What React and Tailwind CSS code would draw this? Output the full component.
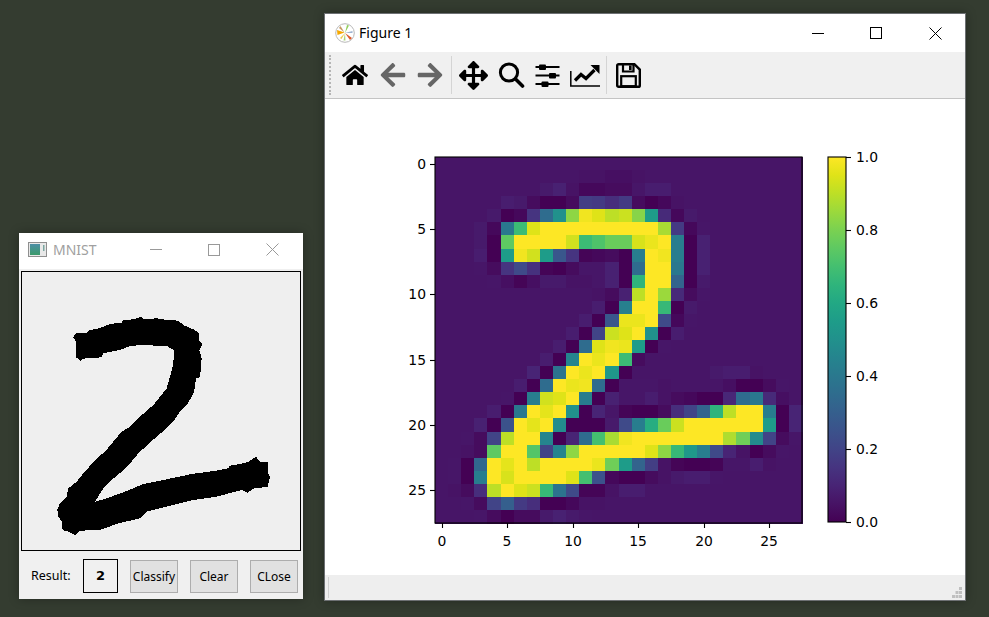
import React from "react";
import { FaHome, FaArrowLeft, FaArrowRight, FaArrowsAlt } from "react-icons/fa";

const VIR = ["#440154","#471365","#482475","#463480","#414487","#3b528b","#355f8d","#2f6c8e","#2a788e","#25848e","#21918c","#1e9c89","#22a884","#2fb47c","#44bf70","#5ec962","#7ad151","#9bd93c","#bddf26","#dfe318","#fde725"];
const hex = (s) => [1, 3, 5].map((i) => parseInt(s.slice(i, i + 2), 16));
const viridis = (p) => {
  const t = (Math.max(0, Math.min(100, p)) / 100) * 20;
  const i = Math.min(19, Math.floor(t));
  const f = t - i;
  const a = hex(VIR[i]);
  const b = hex(VIR[i + 1]);
  return `rgb(${a.map((v, k) => Math.round(v + (b[k] - v) * f)).join(",")})`;
};

const BG = 5.5;
const S = {
  0: [],
  1: [[11, [5, 5, 4, 4, 5]]],
  2: [[8, [7, 9, 5, 2, 2, 3, 3, 6, 8, 8]]],
  3: [[5, [8, 7, 3, 0, 0, 3, 18, 17, 13, 17, 3, 0, 2, 5]]],
  4: [[4, [7, 0, 2, 15, 35, 50, 83, 98, 95, 90, 92, 82, 55, 12, 2, 7]]],
  5: [[3, [7, 2, 40, 68, 95, 100, 100, 100, 100, 100, 100, 100, 100, 100, 87, 17, 2, 6]]],
  6: [[3, [7, 0, 75, 100, 100, 100, 100, 93, 68, 72, 77, 77, 94, 97, 100, 42, 0, 9]]],
  7: [[3, [8, 0, 55, 98, 93, 55, 27, 15, 1, 2, 3, 0, 42, 100, 98, 42, 0, 9]]],
  8: [[3, [6, 3, 15, 22, 14, 1, 0, 3, 6, 6, 9, 0, 35, 100, 100, 40, 0, 9]]],
  9: [[4, [6, 4, 1, 4, 7, 7, 5, 5, 6, 9, 0, 65, 100, 100, 32, 0, 7]]],
  10: [[12, [5, 3, 9, 90, 100, 85, 12, 3, 6]]],
  11: [[12, [8, 0, 43, 100, 100, 67, 0, 7]]],
  12: [[11, [8, 0, 27, 97, 97, 100, 22, 2, 6]]],
  13: [[10, [8, 0, 20, 92, 95, 100, 50, 0, 8]]],
  14: [[9, [8, 0, 35, 95, 98, 97, 55, 0, 6]]],
  15: [[8, [8, 0, 45, 100, 97, 100, 68, 3]]],
  16: [[7, [10, 0, 38, 100, 97, 100, 53, 0]], [21, [7, 8, 8, 5]]],
  17: [[6, [8, 0, 35, 100, 97, 98, 35, 0, 6, 6, 6, 5]], [22, [4, 0, 0, 3, 6]]],
  18: [[5, [6, 0, 42, 93, 95, 100, 42, 0, 9, 6, 6, 8, 5, 3, 2, 0, 0, 11, 35, 40, 12, 4]]],
  19: [[4, [8, 0, 40, 100, 96, 100, 50, 0, 10, 6, 1, 0, 0, 3, 13, 20, 32, 65, 90, 100, 100, 42, 0, 10]]],
  20: [[3, [9, 0, 25, 100, 96, 100, 48, 0, 0, 0, 7, 22, 42, 62, 77, 92, 100, 100, 100, 100, 100, 100, 55, 0, 10]]],
  21: [[2, [6, 3, 20, 90, 100, 100, 45, 0, 10, 35, 70, 87, 98, 100, 100, 100, 100, 100, 100, 100, 88, 78, 48, 20, 3, 6]]],
  22: [[2, [5, 3, 75, 100, 100, 73, 20, 45, 83, 100, 100, 100, 100, 100, 95, 83, 67, 53, 42, 22, 10, 5, 0, 3, 6]]],
  23: [[1, [6, 0, 33, 100, 96, 100, 90, 100, 100, 100, 100, 97, 78, 55, 32, 18, 5, 1, 0, 0, 1, 6, 6, 8, 5]]],
  24: [[1, [6, 0, 42, 100, 94, 100, 100, 100, 100, 95, 70, 25, 2, 0, 0, 3, 5, 7, 8, 8, 6]]],
  25: [[1, [5, 3, 13, 90, 100, 95, 92, 67, 38, 22, 1, 1, 5, 8, 8]]],
  26: [[2, [6, 3, 20, 30, 17, 13, 0, 0, 2, 5, 5]]],
  27: [[3, [6, 3, 0, 3, 3, 7, 9, 7, 6]]],
};

const cell = (r, c) => {
  let v = BG;
  for (const [start, vals] of S[r] || []) {
    if (c >= start && c < start + vals.length) v = vals[c - start];
  }
  return v;
};

const CW = 367 / 28;
const CH = 366 / 28;
const FONT = "'DejaVu Sans', sans-serif";
const stopList = VIR.map((c, i) => ({ o: i * 5, c }));

function Plot() {
  const rects = [];
  for (let r = 0; r < 28; r++) {
    for (let c = 0; c < 28; c++) {
      rects.push(
        <rect
          key={`${r}-${c}`}
          x={435 + c * CW}
          y={157 + r * CH}
          width={CW + 0.5}
          height={CH + 0.5}
          fill={viridis(cell(r, c))}
          shapeRendering="crispEdges"
        />
      );
    }
  }
  const ticks = [0, 5, 10, 15, 20, 25];
  const cbar = [
    ["0.0", 522],
    ["0.2", 449],
    ["0.4", 376],
    ["0.6", 303],
    ["0.8", 230],
    ["1.0", 157],
  ];
  return (
    <svg width="640" height="476" viewBox="325 99 640 476" className="block" style={{ fontFamily: FONT, fontSize: 13.9 }}>
      <defs>
        <linearGradient id="vir" x1="0" y1="1" x2="0" y2="0">
          {stopList.map((s) => (
            <stop key={s.o} offset={`${s.o}%`} stopColor={s.c} />
          ))}
        </linearGradient>
      </defs>
      {rects}
      <rect x="435" y="157" width="367" height="366" fill="none" stroke="#000" strokeWidth="1.1" />
      {ticks.map((t) => {
        const x = Math.round(435 + (t + 0.5) * CW);
        const y = Math.round(157 + (t + 0.5) * CH);
        return (
          <g key={t}>
            <line x1={x + 0.5} x2={x + 0.5} y1="523" y2="528" stroke="#000" strokeWidth="1.1" />
            <text x={x} y="545.5" textAnchor="middle" fill="#000">{t}</text>
            <line x1="430" x2="435" y1={y + 0.5} y2={y + 0.5} stroke="#000" strokeWidth="1.1" />
            <text x="426" y={y + 4.5} textAnchor="end" fill="#000">{t}</text>
          </g>
        );
      })}
      <rect x="828" y="157" width="18" height="365" fill="url(#vir)" stroke="#000" strokeWidth="1.1" />
      {cbar.map(([l, y]) => (
        <g key={l}>
          <line x1="846" x2="851" y1={y + 0.5} y2={y + 0.5} stroke="#000" strokeWidth="1.1" />
          <text x="856" y={y + 4.5} fill="#000">{l}</text>
        </g>
      ))}
    </svg>
  );
}

function WinButtons({ color, gapMin, gapMax, sizeClass }) {
  return (
    <div className={`flex items-center ${sizeClass}`}>
      <svg width="12" height="13" viewBox="0 0 12 13" className={gapMin}><line x1="0" x2="12" y1="6.5" y2="6.5" stroke={color} /></svg>
      <svg width="12" height="12" viewBox="0 0 12 12" className={gapMax}><rect x="0.5" y="0.5" width="11" height="11" fill="none" stroke={color} /></svg>
      <svg width="13" height="13" viewBox="0 0 13 13"><path d="M0.5 0.5 L12.5 12.5 M12.5 0.5 L0.5 12.5" stroke={color} fill="none" /></svg>
    </div>
  );
}

function MplLogo() {
  return (
    <svg width="20" height="20" viewBox="0 0 20 20" className="shrink-0">
      <circle cx="10" cy="10" r="9.3" fill="#fff" stroke="#b8b8b8" strokeWidth="1" />
      <path d="M9.5 9.5 L2 7 L2.5 12 Z" fill="#f5a800" />
      <path d="M9.5 9.5 L5.5 3 L4 5 Z" fill="#c79a62" />
      <path d="M10 10 L14 2.5 L12 2 Z" fill="#8fce5a" />
      <path d="M10 10 L17 15 L15 17 Z" fill="#dc5a2c" />
      <path d="M10 10 L10.5 17.5 L8.5 17.5 Z" fill="#a9d37f" />
      <path d="M10 10 L5 15 L6.5 16 Z" fill="#efc94a" />
      <path d="M10 10 L17.5 8 L17.5 10 Z" fill="#9fb4d2" />
    </svg>
  );
}

function TB({ children }) {
  return <div className="w-[37px] h-[30px] flex items-center justify-center shrink-0">{children}</div>;
}

function Sep({ className }) {
  return <div className={`w-px h-[38px] bg-[#d4d4d4] shrink-0 ${className}`} />;
}

function ZoomIcon() {
  return (
    <svg width="28" height="28" viewBox="0 0 28 28">
      <circle cx="12" cy="11.5" r="8.6" fill="none" stroke="#000" strokeWidth="3" />
      <line x1="18.5" y1="18" x2="25.5" y2="25" stroke="#000" strokeWidth="3.6" strokeLinecap="round" />
    </svg>
  );
}

function SlidersIcon() {
  return (
    <svg width="25" height="23" viewBox="0 0 25 23">
      <g stroke="#000" strokeWidth="2">
        <line x1="0.5" x2="24.5" y1="3" y2="3" />
        <line x1="0.5" x2="24.5" y1="11.5" y2="11.5" />
        <line x1="0.5" x2="24.5" y1="20" y2="20" />
      </g>
      <rect x="4" y="0.5" width="7" height="5.5" rx="1" fill="#000" />
      <rect x="14" y="9" width="7" height="5.5" rx="1" fill="#000" />
      <rect x="6.5" y="17.5" width="7" height="5.5" rx="1" fill="#000" />
    </svg>
  );
}

function ChartIcon() {
  return (
    <svg width="30" height="23" viewBox="0 0 30 23">
      <path d="M0.8 7 V22 H30" fill="none" stroke="#000" strokeWidth="1.5" />
      <path d="M5 16.5 L11 10.5 L16 14.5 L24.5 6" fill="none" stroke="#000" strokeWidth="3.2" />
      <path d="M20.5 1 H29.5 V10 Z" fill="#000" />
    </svg>
  );
}

function SaveIcon() {
  return (
    <svg width="25" height="25" viewBox="0 0 25 25">
      <path d="M1.2 2.6 a1.4 1.4 0 0 1 1.4 -1.4 H18.4 L23.8 6.6 V22.4 a1.4 1.4 0 0 1 -1.4 1.4 H2.6 a1.4 1.4 0 0 1 -1.4 -1.4 Z" fill="none" stroke="#000" strokeWidth="2.4" />
      <path d="M7 1.5 V8.5 H17.5 V1.5" fill="none" stroke="#000" strokeWidth="2.2" />
      <rect x="13" y="2.5" width="2.6" height="4.5" fill="#000" />
      <rect x="5.2" y="13.2" width="14.6" height="10" fill="none" stroke="#000" strokeWidth="2.2" />
    </svg>
  );
}

function Figure() {
  return (
    <div className="absolute left-[324px] top-[13px] w-[642px] h-[588px] bg-white border border-[#6d7073] flex flex-col shadow-[0_0_10px_rgba(0,0,0,0.3)]">
      <div className="h-[38px] shrink-0 flex items-center pl-[10px] bg-white">
        <MplLogo />
        <span className="ml-[4px] mb-[2px] text-[14px] text-black" style={{ fontFamily: "'Noto Sans', sans-serif" }}>Figure 1</span>
        <div className="flex-1" />
        <WinButtons color="#000" gapMin="mr-[46px]" gapMax="mr-[47px]" sizeClass="mr-[23px]" />
      </div>
      <div className="h-[47px] shrink-0 bg-[#f0f0f0] border-b border-[#c4c4c4] flex items-center pl-[4px]">
        <div className="w-[2px] h-[40px] mr-[6px] border-l-2 border-dotted border-[#b5b5b5]" />
        <TB><FaHome className="w-[26px] h-[26px] -ml-[2px] text-black" /></TB>
        <TB><FaArrowLeft className="w-[28px] h-[28px] text-[#666]" /></TB>
        <TB><FaArrowRight className="w-[28px] h-[28px] text-[#666]" /></TB>
        <Sep className="ml-[3px] mr-[3px]" />
        <TB><FaArrowsAlt className="w-[29px] h-[29px] text-black" /></TB>
        <TB><ZoomIcon /></TB>
        <TB><SlidersIcon /></TB>
        <TB><ChartIcon /></TB>
        <Sep className="ml-[3px] mr-[3px]" />
        <TB><SaveIcon /></TB>
      </div>
      <div className="flex-1 bg-white overflow-hidden">
        <Plot />
      </div>
      <div className="h-[25px] shrink-0 bg-[#eeeeee] flex items-center justify-between pl-[3px]">
        <div className="w-px h-[21px] bg-[#d0d0d0]" />
        <svg width="11" height="11" viewBox="0 0 11 11" className="self-end mb-[2px] mr-[2px]">
          {[[7, 0], [3.5, 4], [7, 4], [0, 8], [3.5, 8], [7, 8]].map(([x, y]) => (
            <rect key={`${x}${y}`} x={x} y={y} width="3" height="3" fill="#bfbfbf" />
          ))}
        </svg>
      </div>
    </div>
  );
}

const DIGIT = "100,112 108,98 140,98 150,90 180,84 210,72 245,68 250,60 280,58 305,50 312,58 350,55 380,60 415,62 430,75 460,88 478,100 478,122 488,132 478,150 485,175 480,232 468,235 462,278 440,315 420,335 400,365 380,385 350,410 322,435 295,460 270,490 245,515 215,540 190,565 165,605 200,595 255,575 310,552 370,540 455,522 530,512 565,505 570,497 602,492 625,485 648,470 660,485 685,485 685,520 690,530 683,560 640,566 622,578 605,570 530,590 460,600 380,620 320,635 300,655 235,670 180,690 120,692 105,705 85,695 68,690 65,665 55,650 52,628 60,610 80,590 85,565 110,545 130,520 170,475 195,455 245,395 270,380 300,350 340,315 380,265 390,230 400,190 402,150 380,138 300,135 265,140 240,150 190,160 185,172 130,176 122,182 108,172 108,125";

function Btn({ children, className }) {
  return (
    <div className={`w-[48px] h-[33px] bg-[#e1e1e1] border border-[#adadad] flex items-center justify-center pt-[1px] text-[12px] text-black ${className}`}>
      {children}
    </div>
  );
}

function Mnist() {
  return (
    <div className="absolute left-[19px] top-[233px] w-[284px] h-[366px] bg-[#f0f0f0] flex flex-col shadow-[0_0_10px_rgba(0,0,0,0.3)]" style={{ fontFamily: "'Noto Sans', sans-serif" }}>
      <div className="h-[36px] shrink-0 bg-white flex items-center pl-[9px] pb-[3px]">
        <svg width="19" height="15" viewBox="0 0 19 15" className="shrink-0">
          <rect x="0.5" y="0.5" width="18" height="14" fill="#e8e8e8" stroke="#8f8f8f" />
          <defs>
            <linearGradient id="mi" x1="0" y1="0" x2="0" y2="1">
              <stop offset="0%" stopColor="#4d8fa6" />
              <stop offset="100%" stopColor="#3a9a6a" />
            </linearGradient>
          </defs>
          <rect x="2" y="2" width="10" height="11" fill="url(#mi)" />
          <rect x="15" y="3" width="1.5" height="6" fill="#7aa6a0" />
        </svg>
        <span className="ml-[6px] text-[14px] text-[#a0a0a0]">MNIST</span>
        <div className="flex-1" />
        <WinButtons color="#999" gapMin="mr-[46px]" gapMax="mr-[46px]" sizeClass="mr-[24px]" />
      </div>
      <div className="mx-[2px] mt-[2px] h-[280px] bg-[#efefef] border border-black shrink-0 overflow-hidden">
        <svg width="240" height="240" viewBox="0 0 720 720" className="block ml-[18px] mt-[28px]">
          <polygon points={DIGIT} fill="#000" shapeRendering="crispEdges" />
        </svg>
      </div>
      <div className="flex items-center mt-[8px] pl-[12px]">
        <span className="w-[52px] pt-[1px] text-[12.5px] text-black">Result:</span>
        <div className="w-[35px] h-[34px] border border-black flex items-center justify-center text-[13px] font-bold text-black" style={{ fontFamily: "'DejaVu Sans', sans-serif" }}>2</div>
        <Btn className="ml-[12px]">Classify</Btn>
        <Btn className="ml-[12px]">Clear</Btn>
        <Btn className="ml-[12px]">CLose</Btn>
      </div>
    </div>
  );
}

export default function App() {
  return (
    <div className="relative w-[989px] h-[617px] overflow-hidden bg-[#343c30]">
      <Mnist />
      <Figure />
    </div>
  );
}
